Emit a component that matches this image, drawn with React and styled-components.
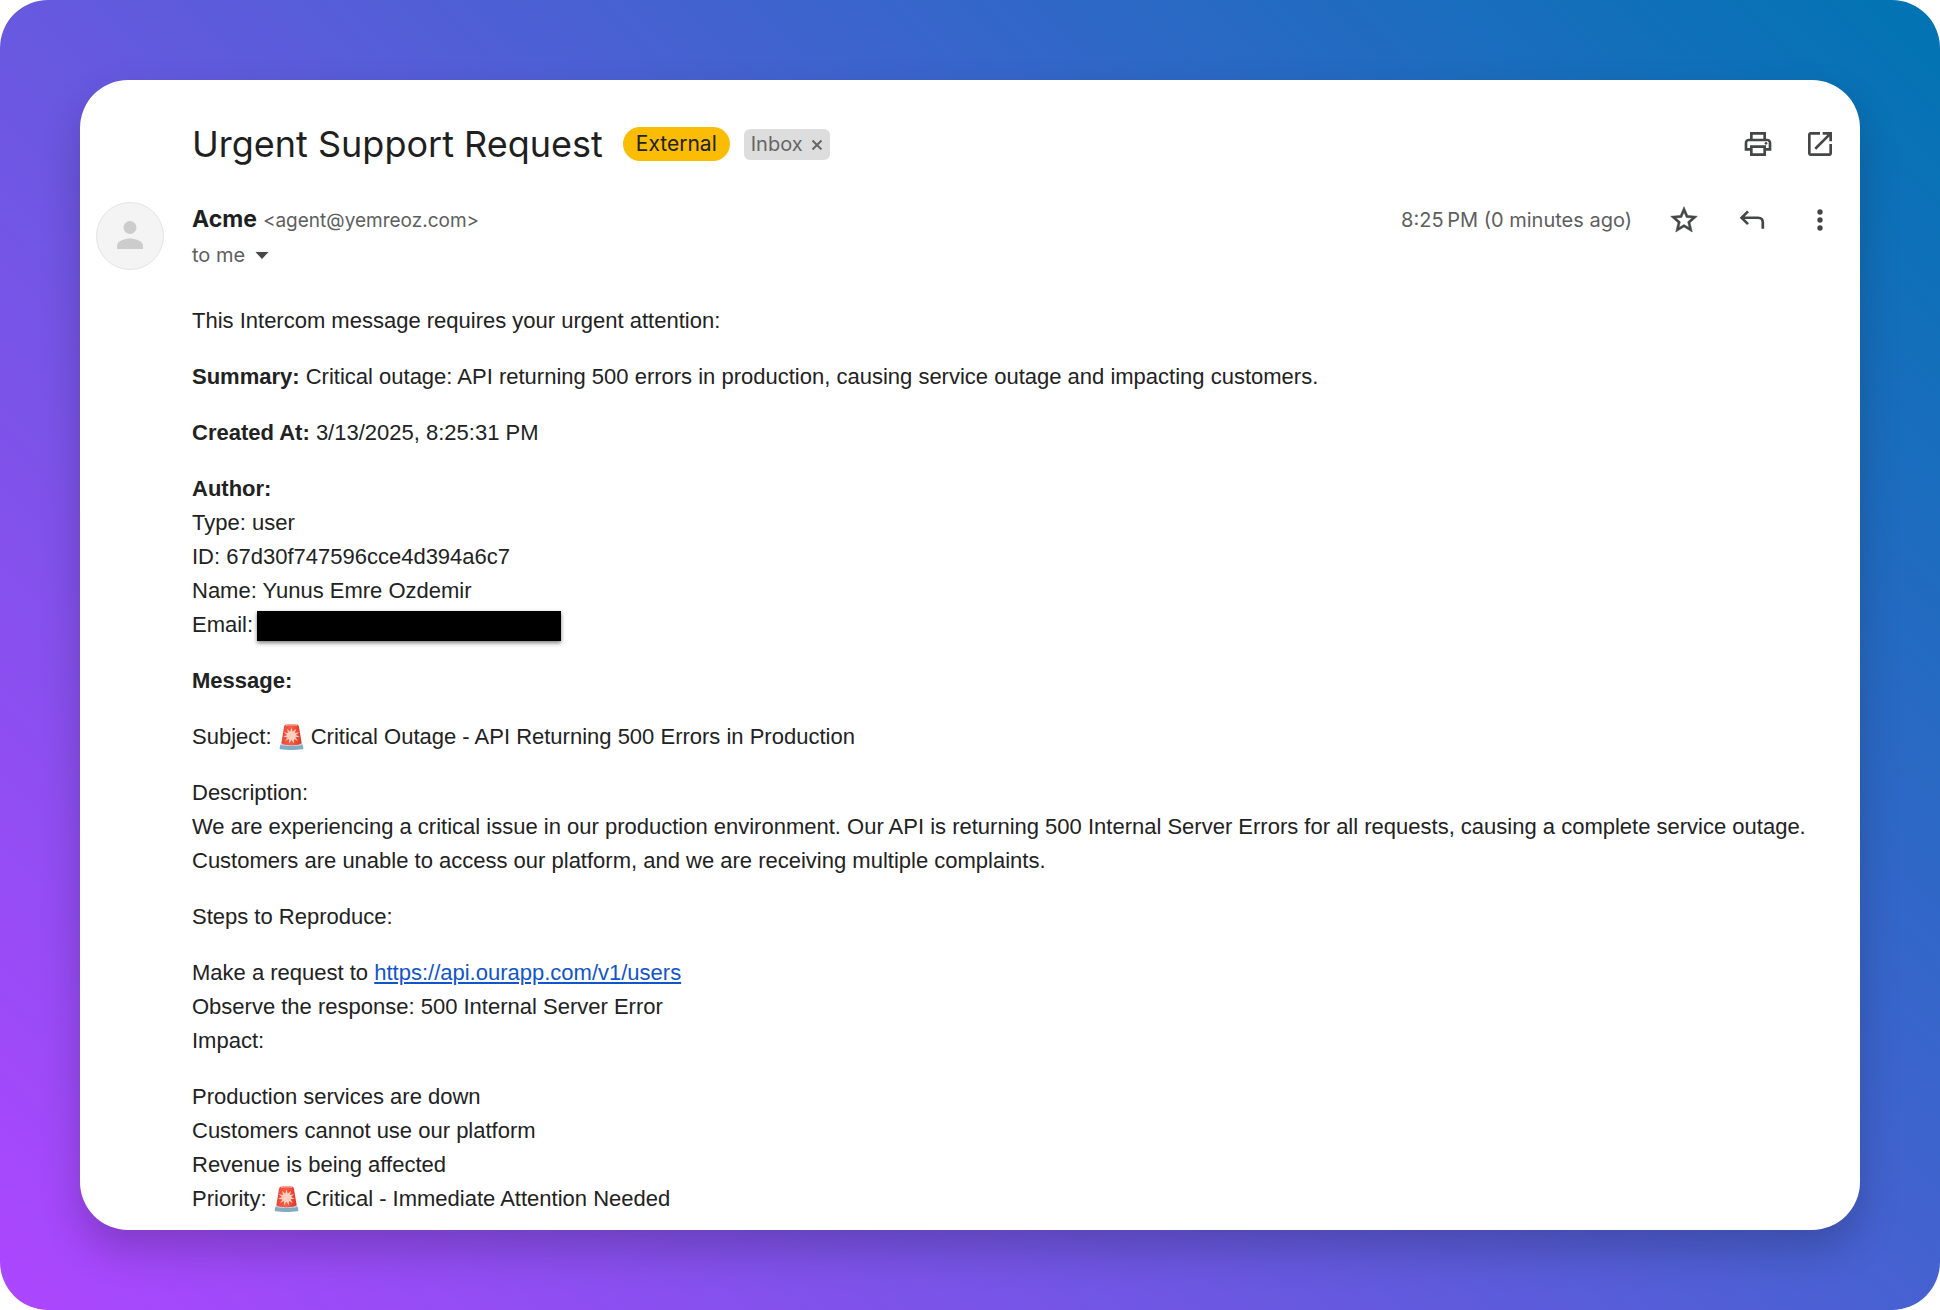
import React from "react";
import styled, { createGlobalStyle } from "styled-components";

const GlobalStyle = createGlobalStyle`
  * {
    box-sizing: border-box;
  }
  body {
    margin: 0;
    background: #ffffff;
    color: #222222;
    font-family: "Liberation Sans", Arial, sans-serif;
  }
`;

const Backdrop = styled.div`
  display: flex;
  min-height: 100vh;
  padding: 80px;
  border-radius: 48px;
  background: linear-gradient(45deg, #ad46ff 0%, #0074b2 100%);
`;

const Card = styled.main`
  display: flex;
  flex: 1;
  flex-direction: column;
  min-width: 0;
  padding: 40px 24px 12px 16px;
  border-radius: 48px;
  background: #ffffff;
  box-shadow: 0 20px 40px rgba(0, 0, 0, 0.2);
`;

const TitleRow = styled.header`
  display: flex;
  align-items: center;
  justify-content: space-between;
  gap: 32px;
  min-height: 48px;
  padding-left: 96px;
`;

const TitleGroup = styled.div`
  display: flex;
  flex-wrap: wrap;
  align-items: center;
`;

const Title = styled.h1`
  margin: 0 20px 0 0;
  font-family: Inter, sans-serif;
  font-size: 36px;
  font-weight: 400;
  line-height: 48px;
  color: #1f1f1f;
`;

const ExternalBadge = styled.span`
  margin-right: 14px;
  padding: 0 13px;
  border-radius: 18px;
  background: #fbbc04;
  font-family: Inter, sans-serif;
  font-size: 21px;
  line-height: 34px;
  color: #222222;
`;

const FolderLabel = styled.span`
  display: inline-flex;
  align-items: center;
  gap: 8px;
  padding: 0 7px;
  border-radius: 6px;
  background: #dddddd;
  font-family: Inter, sans-serif;
  font-size: 20px;
  line-height: 31px;
  color: #666666;
`;

const IconButton = styled.button`
  display: inline-flex;
  align-items: center;
  justify-content: center;
  padding: 0;
  border: 0;
  background: transparent;
  color: #444746;
  cursor: pointer;

  svg {
    display: block;
    width: ${(p) => p.$size}px;
    height: ${(p) => p.$size}px;
  }
`;

const Actions = styled.div`
  display: flex;
  align-items: center;
  gap: ${(p) => p.$gap}px;
  min-height: 36px;
`;

const SenderRow = styled.section`
  display: flex;
  align-items: flex-start;
  margin-top: 34px;
`;

const Avatar = styled.div`
  display: flex;
  flex: none;
  align-items: center;
  justify-content: center;
  width: 68px;
  height: 68px;
  margin-right: 28px;
  border: 1px solid #e4e4e4;
  border-radius: 50%;
  background: #f4f4f4;
`;

const SenderText = styled.div`
  display: flex;
  flex: 1;
  flex-direction: column;
  min-width: 0;
  font-family: Inter, sans-serif;
`;

const SenderLine = styled.div`
  display: flex;
  align-items: baseline;
  gap: ${(p) => p.$gap}px;
  line-height: 34px;
`;

const SenderName = styled.strong`
  font-size: 23px;
  font-weight: 700;
  color: #1f1f1f;
`;

const Muted = styled.span`
  font-family: Inter, sans-serif;
  font-size: ${(p) => p.$size || 20}px;
  color: #5e5e5e;
`;

const Body = styled.article`
  display: flex;
  flex-direction: column;
  gap: 22px;
  margin-top: 32px;
  padding-left: 96px;
  font-size: 22px;
  line-height: 34px;
`;

const Paragraph = styled.p`
  margin: 0;
`;

const Line = styled.span`
  display: block;
`;

const Redacted = styled.span`
  display: inline-block;
  width: 304px;
  height: 30px;
  margin-left: 4px;
  vertical-align: middle;
  background: #000000;
  box-shadow: 0 2px 4px rgba(0, 0, 0, 0.5);
`;

const Link = styled.a`
  color: #1155cc;
  text-decoration: underline;
`;

const SirenSvg = styled.svg`
  width: 25px;
  height: 26px;
  margin: 0 1px;
  vertical-align: -6px;
`;

function Siren() {
  return (
    <SirenSvg viewBox="0 0 25 26" role="img" aria-label="Alert">
      <defs>
        <linearGradient id="dome" x1="0" y1="0" x2="1" y2="0">
          <stop offset="0" stopColor="#ee4433" />
          <stop offset="0.5" stopColor="#fb5c48" />
          <stop offset="1" stopColor="#e03426" />
        </linearGradient>
      </defs>
      <path d="M1.5 20.5h22l.9 3.2c.1.8-.4 1.4-1.2 1.6-6 .9-15.4.9-21.4 0-.8-.2-1.3-.8-1.2-1.6z" fill="#82acc2" />
      <path d="M1.5 20.5c1-1 2-1.2 3-1.2h16c1 0 2 .2 3 1.2-2 2-20 2-22 0z" fill="#bcd5e1" />
      <path d="M5 3C5.2 1.3 6.3.5 8 .5h9c1.7 0 2.8.8 3 2.5l2.7 16.2c-3 2.6-17.4 2.6-20.4 0z" fill="url(#dome)" />
      <path d="M7 1.6c3-.7 8-.7 11 0" stroke="#ff9a86" strokeWidth="1" fill="none" />
      <path
        d="M12.5 3.5l1.3 4.2 3.3-2.9-1.1 4.2 4.3-.8-3.5 2.7 4 1.9-4.3.5 2.4 3.7-3.9-1.9-.2 4.4-2.3-3.8-2.4 3.7-.1-4.3-3.9 1.9 2.4-3.6-4.3-.6 4-1.900L4.7 8.2l4.3.8-1-4.2 3.200 2.900z"
        fill="#ffd0bd"
      />
    </SirenSvg>
  );
}

function PrintIcon() {
  return (
    <svg viewBox="0 0 24 24" fill="currentColor" aria-hidden="true">
      <path d="M19 8h-1V3H6v5H5c-1.660 0-3 1.340-3 3v6h4v4h12v-4h4v-6c0-1.660-1.340-3-3-3zM8 5h8v3H8V5zm8 14H8v-4h8v4zm2-4v-2H6v2H4v-4c0-.55.45-1 1-1h14c.55 0 1 .45 1 1v4h-2z" />
      <circle cx="18" cy="11.5" r="1" />
    </svg>
  );
}

function OpenIcon() {
  return (
    <svg viewBox="0 0 24 24" fill="currentColor" aria-hidden="true">
      <path d="M19 19H5V5h7V3H5c-1.110 0-2 .9-2 2v14c0 1.100.89 2 2 2h14c1.100 0 2-.9 2-2v-7h-2v7zM14 3v2h3.590l-9.830 9.830 1.410 1.410L19 6.410V10h2V3h-7z" />
    </svg>
  );
}

function StarIcon() {
  return (
    <svg viewBox="0 0 24 24" fill="currentColor" stroke="currentColor" strokeWidth="0.4" aria-hidden="true">
      <path d="M22 9.240l-7.190-.62L12 2 9.190 8.630 2 9.240l5.460 4.730L5.820 21 12 17.270 18.180 21l-1.630-7.030L22 9.240zM12 15.400l-3.760 2.270 1-4.280-3.320-2.880 4.380-.38L12 6.100l1.710 4.040 4.380.38-3.320 2.880 1 4.280L12 15.400z" />
    </svg>
  );
}

function ReplyIcon() {
  return (
    <svg viewBox="0 0 24 24" fill="none" stroke="currentColor" strokeWidth="2" aria-hidden="true">
      <path d="M9 5.500L4.200 10.300 9 15.100M4.200 10.300H16.500q3.600 0 3.600 3.600V18.500" />
    </svg>
  );
}

function MoreIcon() {
  return (
    <svg viewBox="0 0 24 24" fill="currentColor" aria-hidden="true">
      <circle cx="12" cy="6" r="2" />
      <circle cx="12" cy="12" r="2" />
      <circle cx="12" cy="18" r="2" />
    </svg>
  );
}

function CloseIcon() {
  return (
    <svg viewBox="0 0 12 12" fill="none" stroke="#666666" strokeWidth="2" aria-hidden="true">
      <path d="M1.500 2.500l9 9M10.500 2.500l-9 9" />
    </svg>
  );
}

function CaretIcon() {
  return (
    <svg viewBox="0 0 14 14" fill="currentColor" aria-hidden="true">
      <path d="M0.500 4h13L7 11z" />
    </svg>
  );
}

function PersonIcon() {
  return (
    <svg width="40" height="40" viewBox="0 0 40 40" fill="#cccccc" aria-hidden="true">
      <circle cx="20" cy="11.500" r="6.500" />
      <path d="M7 33v-3.500c0-4.500 8.600-7 13-7s13 2.500 13 7V33z" />
    </svg>
  );
}

export default function App() {
  return (
    <>
      <GlobalStyle />
      <Backdrop>
        <Card>
          <TitleRow>
            <TitleGroup>
              <Title>Urgent Support Request</Title>
              <ExternalBadge>External</ExternalBadge>
              <FolderLabel>
                Inbox
                <IconButton type="button" $size={12} aria-label="Remove label Inbox">
                  <CloseIcon />
                </IconButton>
              </FolderLabel>
            </TitleGroup>
            <Actions $gap={30}>
              <IconButton type="button" $size={32} aria-label="Print all">
                <PrintIcon />
              </IconButton>
              <IconButton type="button" $size={32} aria-label="Open in new window">
                <OpenIcon />
              </IconButton>
            </Actions>
          </TitleRow>

          <SenderRow>
            <Avatar>
              <PersonIcon />
            </Avatar>
            <SenderText>
              <SenderLine $gap={6}>
                <SenderName>Acme</SenderName>
                <Muted $size={19}>&lt;agent@yemreoz.com&gt;</Muted>
              </SenderLine>
              <SenderLine $gap={10}>
                <Muted>to me</Muted>
                <IconButton type="button" $size={14} aria-label="Show details">
                  <CaretIcon />
                </IconButton>
              </SenderLine>
            </SenderText>
            <Actions $gap={36}>
              <Muted as="time">8:25{"\u202f"}PM (0 minutes ago)</Muted>
              <IconButton type="button" $size={32} aria-label="Star">
                <StarIcon />
              </IconButton>
              <IconButton type="button" $size={32} aria-label="Reply">
                <ReplyIcon />
              </IconButton>
              <IconButton type="button" $size={32} aria-label="More">
                <MoreIcon />
              </IconButton>
            </Actions>
          </SenderRow>

          <Body>
            <Paragraph>This Intercom message requires your urgent attention:</Paragraph>
            <Paragraph>
              <strong>Summary:</strong> Critical outage: API returning 500 errors in production, causing service
              outage and impacting customers.
            </Paragraph>
            <Paragraph>
              <strong>Created At:</strong> 3/13/2025, 8:25:31 PM
            </Paragraph>
            <Paragraph>
              <Line>
                <strong>Author:</strong>
              </Line>
              <Line>Type: user</Line>
              <Line>ID: 67d30f747596cce4d394a6c7</Line>
              <Line>Name: Yunus Emre Ozdemir</Line>
              <Line>
                Email:
                <Redacted />
              </Line>
            </Paragraph>
            <Paragraph>
              <strong>Message:</strong>
            </Paragraph>
            <Paragraph>
              Subject: <Siren /> Critical Outage - API Returning 500 Errors in Production
            </Paragraph>
            <Paragraph>
              <Line>Description:</Line>
              <Line>
                We are experiencing a critical issue in our production environment. Our API is returning 500 Internal
                Server Errors for all requests, causing a complete service outage.
              </Line>
              <Line>Customers are unable to access our platform, and we are receiving multiple complaints.</Line>
            </Paragraph>
            <Paragraph>Steps to Reproduce:</Paragraph>
            <Paragraph>
              <Line>
                Make a request to <Link href="https://api.ourapp.com/v1/users">https://api.ourapp.com/v1/users</Link>
              </Line>
              <Line>Observe the response: 500 Internal Server Error</Line>
              <Line>Impact:</Line>
            </Paragraph>
            <Paragraph>
              <Line>Production services are down</Line>
              <Line>Customers cannot use our platform</Line>
              <Line>Revenue is being affected</Line>
              <Line>
                Priority: <Siren /> Critical - Immediate Attention Needed
              </Line>
            </Paragraph>
          </Body>
        </Card>
      </Backdrop>
    </>
  );
}
